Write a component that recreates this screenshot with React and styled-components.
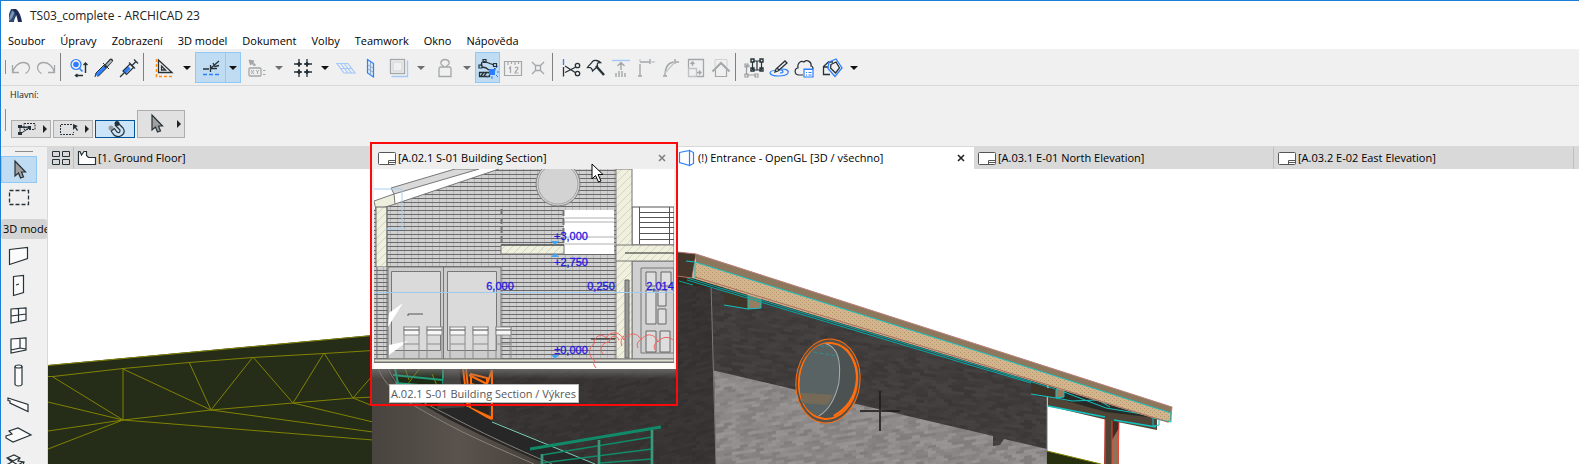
import React, { useState } from "react";
import styled, { createGlobalStyle } from "styled-components";

const GlobalStyle = createGlobalStyle`
  * {
    box-sizing: border-box;
  }
  body {
    margin: 0;
    font-family: "Open Sans", "Noto Sans", sans-serif;
    font-size: 12px;
    color: #000000;
    background: #ffffff;
  }
  button {
    margin: 0;
    padding: 0;
    border: none;
    background: none;
    font: inherit;
    color: inherit;
  }
`;

const Window = styled.div`
  display: flex;
  flex-direction: column;
  height: 100vh;
  overflow: hidden;
  border-top: 1px solid #1a7fd4;
  border-left: 1px solid #1a7fd4;
`;

const TitleBar = styled.header`
  display: flex;
  align-items: center;
  gap: 7px;
  height: 30px;
  padding-left: 7px;
  flex-shrink: 0;
`;

const Title = styled.h1`
  margin: 0;
  font-size: 12px;
  font-weight: normal;
  line-height: 16px;
  color: #222222;
`;

const MenuBar = styled.nav`
  display: flex;
  gap: 15px;
  height: 18px;
  padding-left: 7px;
  flex-shrink: 0;
`;

const MenuItem = styled.button`
  font-size: 11px;
  line-height: 20px;
  white-space: nowrap;
`;

const ToolBar = styled.div`
  display: flex;
  align-items: center;
  height: 37px;
  flex-shrink: 0;
  background: #f0f0f0;
  border-bottom: 1px solid #d9d9d9;
`;

const Grip = styled.span`
  width: 1px;
  height: ${(props) => props.$height}px;
  margin-left: 4px;
  margin-right: ${(props) => props.$after}px;
  background: #8c8c8c;
`;

const Separator = styled.span`
  width: 8px;
  height: 28px;
  padding-left: 2px;
  &::before {
    content: "";
    display: block;
    width: 1px;
    height: 28px;
    background: #808080;
  }
`;

const ToolButton = styled.button`
  display: flex;
  align-items: center;
  justify-content: center;
  width: ${(props) => (props.$wide ? 31 : 25)}px;
  height: 31px;
  padding-top: 1px;
  background: ${(props) => (props.$active ? "#bfdcf3" : "none")};
  border: 1px solid ${(props) => (props.$active ? "#90c8f6" : "transparent")};
`;

const ArrowButton = styled(ToolButton)`
  width: 16px;
  margin-left: -1px;
  &::before {
    content: "";
    border: 4px solid transparent;
    border-top-color: ${(props) => (props.$muted ? "#6e6e6e" : "#111111")};
    border-bottom: none;
  }
`;

const Options = styled.section`
  height: 61px;
  padding-top: 3px;
  flex-shrink: 0;
  background: #f0f0f0;
  border-bottom: 1px solid #d9d9d9;
`;

const OptionsLabel = styled.div`
  padding-left: 9px;
  font-size: 9px;
  line-height: 12px;
  color: #222222;
`;

const OptionsRow = styled.div`
  display: flex;
  align-items: flex-end;
  gap: 2px;
  height: 37px;
`;

const OptionsGrip = styled(Grip)`
  align-self: center;
`;

const OptionButton = styled.button`
  display: flex;
  align-items: center;
  justify-content: ${(props) => (props.$active ? "center" : "space-between")};
  width: ${(props) => (props.$big ? 48 : 40)}px;
  height: ${(props) => (props.$big ? 28 : 18)}px;
  padding: 0 3px 0 6px;
  background: ${(props) => (props.$active ? "#cce4f7" : "#e1e1e1")};
  border: 1px solid ${(props) => (props.$active ? "#005499" : "#adadad")};
`;

const Flyout = styled.i`
  border: 4px solid transparent;
  border-left-color: #222222;
  border-right: none;
`;

const Workspace = styled.div`
  display: flex;
  flex: 1;
  min-height: 0;
`;

const SideBar = styled.aside`
  width: 47px;
  padding-top: 4px;
  flex-shrink: 0;
  overflow: hidden;
  background: #f0f0f0;
  border-right: 1px solid #d9d9d9;
`;

const SideGrip = styled.div`
  width: 18px;
  height: 1px;
  margin: 0 0 4px 14px;
  background: #8c8c8c;
`;

const SideButton = styled.button`
  display: flex;
  align-items: center;
  justify-content: center;
  width: 36px;
  height: ${(props) => (props.$active ? 27 : 30)}px;
  background: ${(props) => (props.$active ? "#bfdcf3" : "none")};
  border: 1px solid ${(props) => (props.$active ? "#90c8f6" : "transparent")};
`;

const SideHeading = styled.h2`
  margin: 6px 0 1px;
  padding: 0 2px;
  height: 20px;
  font-size: 11px;
  font-weight: normal;
  line-height: 20px;
  white-space: nowrap;
  overflow: hidden;
  background: #d4d4d4;
  border-radius: 3px;
`;

const Main = styled.main`
  display: flex;
  flex-direction: column;
  flex: 1;
  min-width: 0;
`;

const TabBar = styled.div`
  display: flex;
  height: 22px;
  flex-shrink: 0;
  background: #d9d9d9;
`;

const Overview = styled.button`
  display: flex;
  align-items: center;
  justify-content: center;
  width: 26px;
  border-right: 1px solid #bfbfbf;
`;

const Tab = styled.div`
  position: relative;
  display: flex;
  align-items: center;
  flex: 0 1 300px;
  min-width: 0;
  padding: 0 8px 0 3px;
  background: ${(props) => (props.$active ? "#ffffff" : "#d9d9d9")};
  border-right: 1px solid ${(props) => (props.$active ? "#ffffff" : "#bfbfbf")};
`;

const TabLabel = styled.button`
  display: flex;
  align-items: center;
  gap: 1px;
  flex: 1;
  min-width: 0;
  font-size: 11px;
  line-height: 20px;
  white-space: nowrap;
`;

const Close = styled.button`
  display: flex;
  color: ${(props) => (props.$muted ? "#808080" : "#222222")};
`;

const Preview = styled.div`
  position: absolute;
  z-index: 2;
  top: -5px;
  left: -4px;
  width: 308px;
  height: 264px;
  border: 2px solid #fa0a0a;
`;

const PreviewHead = styled.div`
  display: flex;
  align-items: center;
  height: 25px;
  padding: 3px 10px 0 5px;
  background: #eeeeee;
`;

const PreviewBody = styled.div`
  padding: 0 2px;
  background: #f0f0f0;
`;

const PreviewFoot = styled.div`
  display: flex;
  align-items: flex-start;
  height: 35px;
  padding: 15px 0 0 17px;
  background: linear-gradient(rgba(120, 120, 120, 0.7), rgba(60, 60, 60, 0) 10px);
`;

const Tooltip = styled.div`
  padding: 0 2px 0 1px;
  font-size: 11px;
  line-height: 17px;
  white-space: nowrap;
  color: #575757;
  background: #ffffff;
  border: 1px solid #bbbbbb;
`;

const Pointer = styled.svg`
  position: absolute;
  left: 219px;
  top: 19px;
`;

const Viewport = styled.div`
  flex: 1;
  min-height: 0;
  overflow: hidden;
  background: #ffffff;
`;

const Drawing = styled.svg`
  display: block;
  width: 100%;
`;

const ink = "#263238";
const grey = "#a3a7a9";
const blue = "#2b7fff";
const pale = "#a3c8fa";

const icons = {
  undo: (
    <g stroke={grey} strokeWidth="1.3">
      <path d="M3.500 9v7.500H10M3.500 16.500C5 11 9 6.500 14 6.500c7 0 9 7 2.500 11" />
    </g>
  ),
  redo: (
    <g stroke={grey} strokeWidth="1.3">
      <path d="M20.500 9v7.500H14M20.500 16.500C19 11 15 6.500 10 6.500c-7 0-9 7-2.500 11" />
    </g>
  ),
  find: (
    <g>
      <circle cx="9" cy="8.500" r="5" stroke={blue} strokeWidth="1.200" />
      <circle cx="9" cy="8.500" r="2.800" fill={blue} stroke="none" />
      <path d="M12.500 12.500l3 3" stroke={blue} strokeWidth="1.600" />
      <path d="M9 19.500h7M10.500 18l-2 1.500 2 1.500M18.500 17V7.500M16.500 9l2-2 2 2" strokeWidth="1.400" />
    </g>
  ),
  dropper: (
    <g>
      <path d="M4.500 19.500L13 11" stroke={blue} strokeWidth="3.500" />
      <path d="M3 21l1-4 8-8M6 20.500l8.500-8.500M11 7l6 6" />
      <path d="M14 10l5-5.500" strokeWidth="4" strokeLinecap="round" />
      <path d="M14.500 9.500l5-5" stroke="#b8bdbf" strokeWidth="1.800" />
    </g>
  ),
  syringe: (
    <g>
      <path d="M7.500 16.500l5-5" stroke={blue} strokeWidth="3.500" />
      <path d="M3 21l4-4M6 15l7-7 3.500 3.500-7 7zM12 6.500l6 6M15 9.500l4-4M17 3.500l4 4" strokeWidth="1.200" />
    </g>
  ),
  setsquare: (
    <g>
      <path d="M5.500 4v12.500H19zM8.500 10v4h4z" strokeWidth="1.300" />
      <path d="M3.500 3v17.500H21" stroke="#ff8c1a" strokeWidth="1.500" strokeDasharray="3 2" />
    </g>
  ),
  snap: (
    <g>
      <path d="M4 13h6M11.500 9v7M12 12.500h6M12 12l8-7M14 7l2 3.500 4-1" strokeWidth="1.300" />
      <path d="M4 18.500h17" stroke={blue} strokeWidth="1.500" strokeDasharray="4 2" />
    </g>
  ),
  coords: (
    <g stroke={grey}>
      <path d="M4 4l5 1-1 1.500 2.500 2.500-1 1L7 7.500 5.500 9z" fill={grey} />
      <rect x="4" y="12" width="12" height="8" rx="1" strokeWidth="1.300" />
      <path d="M6 14l3 4m0-4l-3 4m5-4l1.500 2 1.500-2m-1.500 2v2M18 14.500h2.500M18 18.500h2.500" />
    </g>
  ),
  grid: (
    <g strokeWidth="1.300">
      <path d="M8 3v18M16 3v18M3 8h18M3 16h18" strokeDasharray="3 2" />
      <path d="M8 6v4M6 8h4M16 6v4M14 8h4M8 14v4M6 16h4M16 14v4M14 16h4" strokeWidth="2" />
    </g>
  ),
  plane: (
    <g stroke={pale} strokeWidth="1.200">
      <path d="M3 7.500h11l7 9.500H10zM6.500 12.500h11M7 8l7 9M10.500 8l7 9" />
    </g>
  ),
  plane3d: (
    <g>
      <path d="M8.500 3.500l6 4v13.500l-6-4z" stroke={blue} fill="#dce9fb" strokeWidth="1.200" />
      <path d="M11.500 6v13M8.500 8.500l6 4M8.500 12.500l6 4" stroke="#7d99bb" strokeWidth="0.800" />
    </g>
  ),
  frame: (
    <g>
      <rect x="3.500" y="3.500" width="14" height="14" stroke={grey} strokeWidth="1.300" />
      <path d="M4.500 20.500h16v-16" stroke={pale} strokeWidth="1.300" />
      <rect x="6" y="6" width="9" height="9" stroke="#cdd0d2" />
    </g>
  ),
  weight: (
    <g stroke={grey} strokeWidth="1.300">
      <path d="M10 11V9.500C6 8 8 3.500 12 3.500s6 4.500 2 6V11M7.500 11h9c1 0 1.500 1 1.500 2v7.500H6V13c0-1 .5-2 1.500-2z" />
    </g>
  ),
  trace: (
    <g strokeWidth="1.300">
      <path d="M7 5l11 4M6 6l-1 4M19 12l-1 5M6 11c3 0 5 1 7 3" />
      <path d="M3 9h3v3H3zM7 3.500h3v3H7zM17.500 7.500h3v3h-3z" strokeWidth="1.200" />
      <path d="M3.500 16.500h10v4h-10zM5 20l3-4m0 4l3-4" />
      <path d="M13 13h6v6h-6z" fill={blue} stroke="none" />
      <path d="M20 12l2-2M21 16h2M20 19l2 2M16 20v3M12 20l-1 2" stroke={blue} strokeWidth="1" />
    </g>
  ),
  ruler: (
    <g stroke={grey}>
      <path d="M3.500 19.500v-14h17v14zM7 5v4M10.500 5v3M14 5v4M17.500 5v3" strokeWidth="1.200" />
      <path d="M8 12.500l1.500-1.500v6M14 12q2-2 3 0c0 2-3 3-3 5h3.500" strokeWidth="1.200" />
    </g>
  ),
  nodeX: (
    <g stroke={grey} strokeWidth="1.300">
      <path d="M9.500 9.500h5v5h-5zM6 6l3.500 3.500M18 6l-3.500 3.500M6 18l3.500-3.500M18 18l-3.500-3.500" />
    </g>
  ),
  scissors: (
    <g strokeWidth="1.300">
      <path d="M4.500 3v6" stroke={blue} />
      <path d="M4.500 11v9.500M6 10l11 7M6 16.500L17 11" />
      <circle cx="18.500" cy="9.500" r="2.200" />
      <circle cx="18.500" cy="17.500" r="2.200" />
    </g>
  ),
  axe: (
    <g strokeWidth="1.300">
      <path d="M3.500 11.500C7 11 8 12 8.500 15l5-4.500c-1-4 1-4 3-4-2-2-6-3-8-1-1 2-3 3-5 6z" />
      <path d="M12 10l8 9" strokeWidth="2.400" />
    </g>
  ),
  raise: (
    <g stroke={grey} strokeWidth="1.400">
      <path d="M3 4.500h18" stroke={pale} />
      <path d="M12 14V7M8.500 10L12 6.500l3.500 3.500M7 21v-4M10 21v-6M13 21v-6M16 21v-4" />
    </g>
  ),
  corner: (
    <g stroke={grey} strokeWidth="1.400">
      <path d="M6 8v12M6 6h10M16 3v5M4 20h4" />
      <path d="M16 6h5M6 3v3" stroke="#c7c9ca" />
    </g>
  ),
  fillet: (
    <g stroke={grey} strokeWidth="1.400">
      <path d="M6 20C6 12 9 6 16 6M16 3v5M4 20h4M16 6h4" />
      <path d="M6 17L16 6" stroke="#c7c9ca" />
    </g>
  ),
  resize: (
    <g stroke={grey} strokeWidth="1.300">
      <path d="M4.500 12V3.500h15v17H13M8.500 10V6M6.500 8l2-2 2 2M13 16.500h4M15 14.500l2 2-2 2" />
      <path d="M4.500 12.500h8v8h-8z" stroke="#c0c3c4" />
    </g>
  ),
  roof: (
    <g stroke={grey} strokeWidth="2">
      <path d="M6 11V3.500h12V11" stroke="#cfd1d2" strokeWidth="1" />
      <path d="M6.500 14v6.500h11V14" strokeWidth="1.200" />
      <path d="M3.500 15.500L12 7l8.500 8.500" />
    </g>
  ),
  group: (
    <g strokeWidth="1.200">
      <path d="M4.500 9v10M5 19h9M4 10h4" stroke="#9a9ea0" />
      <path d="M3 8h3v3H3zM3 18h3v3H3zM13 18h3v3h-3z" stroke="#9a9ea0" />
      <path d="M10.500 6v8M19.500 6v8M11 5h8M11 14h8M15 5v9" />
      <path d="M9 3h3v3H9zM18 3h3v3h-3zM9 12h3v3H9zM18 12h3v3h-3z" strokeWidth="1.400" />
    </g>
  ),
  edit: (
    <g>
      <path d="M14 13c5 0 8 1 7 4-2 4-17 4-18 0 0-3 6-3 10-3s4 3 0 3" stroke={blue} strokeWidth="1.200" />
      <path d="M8 16l1-3 9-8 2 2-9 8zM10 12l2 2" strokeWidth="1.300" fill="#eee" />
    </g>
  ),
  cloud: (
    <g>
      <path d="M11 19H7c-5 0-5-7-1-7-1-5 3-8 6-6 3-3 8 0 7 4 1 0 2 1 2 3" strokeWidth="1.200" />
      <path d="M12 13h9v8h-9z" stroke={blue} fill="#fff" strokeWidth="1.200" />
      <path d="M12 13.500h9M14 16.500h1M16.500 16.500h3M14 19h1M16.500 19h3" stroke={blue} strokeWidth="1.200" />
    </g>
  ),
  rotate: (
    <g strokeWidth="1.300">
      <path d="M10 18.500H3.500v-8l5-4.500H13M4 11h4" />
      <path d="M9 6l7-3 6 9-7 8.500-7-8z" stroke={blue} />
      <path d="M11 8.500l5-2.500 3.500 6-4 5-5-5z" />
    </g>
  ),
  arrow: <path d="M8 3v15l3.500-3 2 5 3-1-2-5h4z" fill="#a0a0a0" strokeWidth="1.200" />,
  marquee: (
    <path d="M2.500 4.500h19v14h-19z" strokeWidth="1.300" strokeDasharray="4 2" />
  ),
  wall: <path d="M2.500 6.500l18-2v11l-18 6z" fill="#fbfbfb" strokeWidth="1.200" />,
  door: (
    <path d="M6.500 3.500l10-1v17l-10 3zM9 12l3-1" fill="#fbfbfb" strokeWidth="1.200" />
  ),
  window: (
    <path d="M4 6l15-1v12L4 20zM11.500 5.500v13M4 13l15-2" fill="#fbfbfb" strokeWidth="1.200" />
  ),
  cornerWindow: (
    <path d="M4 6l15-1v12L4 20zM13 5.500v9.500L4 17M13 15l6 1" fill="#fbfbfb" strokeWidth="1.200" />
  ),
  column: (
    <g fill="#fbfbfb" strokeWidth="1.200">
      <path d="M8 3.500v18c1 2 6 2 7 0v-18" />
      <ellipse cx="11.500" cy="3.500" rx="3.500" ry="1.500" />
    </g>
  ),
  beam: (
    <path d="M1 5l20 6.500v7L3 10v-2L1 7.500z" fill="#fbfbfb" strokeWidth="1.200" />
  ),
  slab: (
    <path d="M-1 13l6-2-3-3 9-3 13 7-18 7-7-4z" fill="#fbfbfb" strokeWidth="1.200" />
  ),
  stair: (
    <path d="M0 5l7-3 6 3-2 3 6 1-1 3 6 1-9 5L1 11l4-2zM1 5l5 3 6-3M6 9l5 3 5-3" fill="#fbfbfb" strokeWidth="1.200" />
  ),
};

const Icon = ({ name }) => (
  <svg
    width="24"
    height="24"
    viewBox="0 0 24 24"
    fill="none"
    stroke={ink}
    overflow="visible"
    aria-hidden="true"
  >
    {icons[name]}
  </svg>
);

const tools = [
  ["undo"],
  ["redo"],
  null,
  ["find"],
  ["dropper"],
  ["syringe"],
  null,
  ["setsquare", "split"],
  ["snap", "split", "active"],
  ["coords", "split", "muted"],
  ["grid", "split"],
  ["plane"],
  ["plane3d"],
  ["frame", "split", "muted"],
  ["weight", "split", "muted"],
  ["trace", "", "active"],
  ["ruler"],
  ["nodeX"],
  null,
  ["scissors"],
  ["axe"],
  ["raise"],
  ["corner"],
  ["fillet"],
  ["resize"],
  ["roof"],
  null,
  ["group"],
  ["edit"],
  ["cloud"],
  ["rotate", "split"],
];

const menu = [
  "Soubor",
  "Úpravy",
  "Zobrazení",
  "3D model",
  "Dokument",
  "Volby",
  "Teamwork",
  "Okno",
  "Nápověda",
];

const sideTools = [
  "wall",
  "door",
  "window",
  "cornerWindow",
  "column",
  "beam",
  "slab",
  "stair",
];

const Logo = () => (
  <svg width="15" height="16" viewBox="0 0 15 16" aria-hidden="true">
    <path d="M3 1h5v13H1V6z" fill="#2b4a70" />
    <path d="M6 1c-3 3-5 8-5 12 3-2 5-6 6-11z" fill="#7c95b8" />
    <path d="M5 1h3c3 2 5 7 6 13h-4C9 9 8 5 5 3z" fill="#1d2a55" />
    <path d="M8 8c1 2 1 4 1 6H6c0-2 1-4 2-6z" fill="#ffffff" />
  </svg>
);

const LayoutIcon = () => (
  <svg width="20" height="16" viewBox="0 0 20 16" fill="#fff" stroke="#555" aria-hidden="true">
    <rect x="1.500" y="2.500" width="17" height="12" rx="1" />
    <path d="M11.500 14.500v-4h7M12 12.500h6" fill="none" />
  </svg>
);

const PlanIcon = () => (
  <svg width="20" height="16" viewBox="0 0 20 16" fill="#fff" stroke={ink} aria-hidden="true">
    <path d="M1.500 1.500v13h17V7.500h-7l-2-2v-4H7L4.500 5 3 1.500z" strokeWidth="1.200" />
  </svg>
);

const ViewIcon = () => (
  <svg width="20" height="18" viewBox="0 0 20 18" fill="none" stroke={blue} aria-hidden="true">
    <path d="M2.500 3.500l10-2v15l-10-3zM12.500 1.500l4 2v11l-4 2z" strokeWidth="1.200" />
  </svg>
);

const CloseIcon = () => (
  <svg width="8" height="8" viewBox="0 0 8 8" stroke="currentColor" strokeWidth="1.600" aria-hidden="true">
    <path d="M1 1l6 6M7 1L1 7" />
  </svg>
);

// repeatable random so that the bricks stay the same on each render
const bricks = (base, spread) => {
  let seed = 12345;
  const cells = [];
  for (let r = 0; r < 48; r++) {
    for (let c = 0; c < 30; c++) {
      seed = (seed * 16807) % 2147483647;
      const v = base + Math.floor((seed / 2147483647) * spread);
      cells.push(
        <rect
          key={`${r}-${c}`}
          x={c * 8 - (r % 2) * 4}
          y={r * 3}
          width="8"
          height="3"
          fill={`rgb(${v + 4},${v},${v})`}
        />
      );
    }
  }
  return cells;
};

const Scene = () => (
  <Drawing viewBox="48 169 1531 295" fill="none" role="img" aria-label="3D model">
    <defs>
      <pattern id="dark" width="232" height="144" patternUnits="userSpaceOnUse" patternTransform="skewY(6)">
        <rect width="232" height="144" fill="#3f3d3d" />
        {bricks(55, 12)}
      </pattern>
      <pattern id="side" width="232" height="144" patternUnits="userSpaceOnUse" patternTransform="skewY(-14)">
        <rect width="232" height="144" fill="#343333" />
        {bricks(48, 8)}
      </pattern>
      <pattern id="light" width="232" height="144" patternUnits="userSpaceOnUse" patternTransform="skewY(-8)">
        <rect width="232" height="144" fill="#8b8585" />
        {bricks(124, 26)}
      </pattern>
      <pattern id="wood" width="4" height="4" patternUnits="userSpaceOnUse">
        <rect width="4" height="4" fill="#d3b48c" />
        <rect width="1" height="1" fill="#b29469" />
        <rect x="2" y="2" width="1" height="1" fill="#b79a72" />
      </pattern>
      <linearGradient id="brown" x1="0" x2="1" y1="0" y2="0">
        <stop offset="0" stopColor="#49443f" />
        <stop offset="0.500" stopColor="#5a534d" />
        <stop offset="1" stopColor="#453f3a" />
      </linearGradient>
    </defs>

    <path d="M48 365L373 335V464H48z" fill="#252d19" />
    <path
      d="M48 365.500L373 335.500M48 376.500h5l70-8 66-6 64-5 71-4 49-3M53 377l70 43M48 402l75 18-75 11M48 449l75-29V369l88 41-22-48M211 410l42-53 40 46 31-50 29 45 20-23M123 420l88-10 82-7 60-5 20-1M123 420l250 20M211 410l162 22M293 403l80 19M353 398l20 8"
      stroke="#828203"
    />

    <path d="M372 368h339l5 96H372z" fill="url(#side)" />
    <path d="M677 276l36 4 3 184H677z" fill="url(#side)" />
    <path d="M390 368h54v40l-14 1-22-15z" fill="#1f2a15" />
    <path d="M405 368l4 12M420 368l-13 17M432 374l12 28" stroke="#828203" />
    <path d="M395 368l3 16M443 368v38M393 375l50 5M395 383l48 4" stroke="#1f9c79" strokeWidth="2" />
    <path d="M446 368h20l1 40-30 1z" fill="#454341" />
    <path d="M459 368h30v53l-24-11z" fill="#2c2622" />
    <path d="M466 368l4 40 22 10V370l-5 14-18-9M463 368l5 42 24 9M471 374l16 4v10l-16-4zM472 387l15 4v11l-15-4z" stroke="#ff6d0d" strokeWidth="2" />
    <path d="M436 409l32-2 24 14 103 43h-50c-40-16-80-32-115-55z" fill="#272727" />
    <path d="M372 368h14c8 22 32 34 62 51 30 15 58 28 98 45H372z" fill="url(#brown)" />
    <path d="M388 368c7 20 28 31 60 47 32 17 64 32 104 49M378 368c9 23 32 36 60 51 30 17 64 31 96 45" stroke="#858078" />
    <path d="M492 422l103 42" stroke="#7fd0bb" />
    <path d="M530 449l131-22M542 454v10M599 440v24M652 430v34" stroke="#118a68" strokeWidth="3" />
    <path d="M542 455l110-18M542 463l110-14M600 463l52-4" stroke="#118a68" strokeWidth="1.500" />
    <path d="M542 454v10M599 440v24M652 430v34" stroke="#7c9a8d" />

    <path d="M711 278l23 2 236 76 77 27v81H716z" fill="url(#dark)" />
    <path d="M714 370.500l279 65.500v10l7-1 4-6 43 10v15H716z" fill="url(#light)" />
    <path d="M711 284l5 180M1047 396v68" stroke="#7b7977" />

    <path d="M1047 451l54 13h-54z" fill="#26300f" />
    <path d="M1047 451l54 13" stroke="#828203" />
    <path d="M1105 418h14v46h-15z" fill="#514334" />
    <path d="M1112 420h7v44h-7z" fill="#8b745a" />
    <path d="M1112 420h7v8l-7 12z" fill="#3b3027" />
    <path d="M1105 418v46M1112 420v44M1119 420l-1 44" stroke="#ff3b30" />
    <path d="M1048 396l13-4 96 25v13l-54-11-55-13z" fill="#4f4436" />
    <path d="M1048 406l57 11M1114 420l42 7" stroke="#13c2c2" strokeWidth="1.500" />
    <path d="M1044 380l30 6 86 30-4 2-50-6-50-14z" fill="#272a26" />
    <path d="M1031 383l25 7v8l-25-4z" fill="#3e3428" />
    <path d="M1056 389h8v8l-8 1z" fill="#967d60" stroke="#13c2c2" />
    <path d="M1031 394l25 4 16 3 26-1 12 7M1064 392l42 16 48 8M1153 417v9l6-1v-7" stroke="#13c2c2" />

    <path d="M677 275l18 3 40 10-22 0-36-4z" fill="#33291f" />
    <path d="M677 252l19 2-4 24-15-2z" fill="#44362a" stroke="#b06e68" />
    <path d="M724 289l24 6v14l-24-4z" fill="#3f3529" />
    <path d="M748 295h13v13l-13 1z" fill="#967d60" />
    <path d="M724 305l24 4 13-1v-9M748 295v14" stroke="#13c2c2" />
    <path d="M696 254l476 153-1 14L696 276z" fill="#8d785e" />
    <path d="M695 262l276 87 200 64-2 10-199-61L692 278z" fill="url(#wood)" />
    <path d="M696 254l476 153-1 8" stroke="#b98079" />
    <path d="M686 261l9 1v17M695 262l276 87 200 64v9l-18-4" stroke="#13c2c2" />
    <path d="M695 277l276 84 197 61" stroke="#a86d62" />
    <path d="M687 278l283 85 85 26M687 280l283 85 61 18M679 281l14 4" stroke="#07a7a5" />

    <g transform="rotate(7 828 381)">
      <ellipse cx="828" cy="381" rx="32" ry="42" fill="#55504a" stroke="#ff6d0d" />
      <ellipse cx="828" cy="381" rx="29" ry="38" fill="#4c5252" stroke="#ff6d0d" strokeWidth="2" />
      <path d="M821 344c14 2 18 20 18 38-2 18-8 29-16 35-14-2-23-16-23-36 0-18 8-34 21-37z" fill="#5a6363" />
      <path d="M802 396l33-2c-1 4-3 8-5 11l-25 1z" fill="#756a57" />
      <path d="M821 344c14 2 18 20 18 38-2 18-8 29-16 35" stroke="#a8adad" />
      <path d="M842 347c20 18 20 50-4 68" stroke="#ff6d0d" strokeWidth="2" />
      <path d="M810 354l24 1M816 347h8" stroke="#318c8e" strokeDasharray="4 2" />
    </g>
    <path d="M860 411h40M880 391v40" stroke="#1c1c1c" strokeWidth="2" opacity="0.800" />
  </Drawing>
);

const SectionDrawing = () => (
  <Drawing
    viewBox="0 0 300 200"
    fill="none"
    fontFamily='"Liberation Sans", Arial, sans-serif'
    fontSize="11"
    role="img"
    aria-label="Building section"
  >
    <defs>
      <pattern id="siding" width="7" height="4" patternUnits="userSpaceOnUse">
        <rect width="7" height="4" fill="#d0d0d0" />
        <path d="M2.500 0v4" stroke="#b4b4b4" />
        <path d="M0 1.500h7" stroke="#6a6a6a" />
      </pattern>
      <pattern id="hatch" width="8" height="8" patternUnits="userSpaceOnUse">
        <rect width="8" height="8" fill="#f0f0df" />
        <path d="M0 8l8-8" stroke="#d4d4c0" />
      </pattern>
    </defs>
    <rect width="300" height="200" fill="url(#siding)" />
    <path d="M0 0h125L21 35 0 40z" fill="#ffffff" />
    <path d="M17 19L81 0h24L20 25z" fill="#d9d9d9" stroke="#777777" />
    <path d="M21 35L125 0" stroke="#777777" />
    <path d="M0 32l20-7 1 10-19 6z" fill="#eeeedd" stroke="#777777" />
    <path d="M2 38h11v60H2z" fill="url(#hatch)" stroke="#666666" />
    <path d="M0 98h14v92H0z" fill="url(#siding)" />
    <path d="M3 98v92M13 38v152" stroke="#777777" />
    <path d="M0 20h28v40H12" stroke="#a5cff0" />
    <circle cx="184" cy="15" r="22" fill="#d3d3d3" stroke="#808080" />
    <circle cx="184" cy="15" r="20" stroke="#a5a5a5" />
    <path d="M190 41h50v44h-50z" fill="#ffffff" />
    <path d="M190 49h50M190 53h50M190 68h50M190 75h50" stroke="#b0b0b0" />
    <path d="M127.500 40v36M189.500 41v35" stroke="#777777" strokeDasharray="6 3" strokeWidth="2" />
    <path d="M127 76h63v9h-63z" fill="url(#hatch)" stroke="#777777" />
    <path d="M127 76h63" stroke="#333333" />

    <path d="M258 0h42v38h-42z" fill="#ffffff" />
    <path d="M258 38h42v38h-42z" fill="#ffffff" stroke="#555555" />
    <path d="M265 43.500h35M265 48.500h35M265 53.500h35M265 58.500h35M265 64.500h35M265 70.500h35M265.500 38v37M295.500 38v37" stroke="#555555" />
    <path d="M258 92h42v98h-42z" fill="#d0d0d0" stroke="#777777" />
    <path d="M267 99h33v85h-33z" stroke="#777777" />
    <path d="M272 103h10v14h-10zM287 103h10v14h-10zM272 121h10v34h-10zM284 121h8v16h-8zM284 140h8v15h-8zM272 162h10v21h-10zM286 162h10v21h-10z" fill="#dedede" stroke="#666666" />
    <path d="M242 0h16v190h-16z" fill="url(#hatch)" stroke="#777777" />
    <path d="M242 76h58v16h-58z" fill="url(#hatch)" stroke="#777777" />
    <path d="M251 84h49" stroke="#222222" />
    <path d="M251 111h4v78h-4z" fill="#999999" stroke="#666666" />

    <path d="M14 98h113v92H14z" fill="#cccccc" stroke="#777777" />
    <path d="M17.500 102.500h49v79h-49zM73.500 102.500h49v79h-49zM69.500 98v92" fill="#dadada" stroke="#777777" />
    <path d="M15 144l14-10-15 24zM15 186l19-14-19 4z" fill="#ffffff" />
    <path d="M34 147v-2h15" stroke="#555555" />
    {[30, 53, 76, 99, 122].map((x) => (
      <g key={x} stroke="#8c8c8c">
        <path d={`M${x} 157v32M${x + 15} 157v32M${x} 175h15`} />
        <path d={`M${x} 158h15v8H${x}z`} fill="#f7f7f7" />
        <path d={`M${x} 161h15`} stroke="#444444" />
      </g>
    ))}
    <path d="M0 190h300v3H0z" fill="#ddddcd" stroke="#777777" />
    <path d="M0 194h300v6H0z" fill="#fcfcf8" />
    <path d="M0 123.500h300" stroke="#9fcaef" />
    <path d="M217 170h24" stroke="#222222" />
    <path
      d="M222 199c-5-6 0-6-2-8-6-4-6-12 0-16 0-10 10-10 12-6 4-7 14-7 18 2 4-8 14-8 17 0 6-8 14-6 17 2 4-6 12-6 16-1M229 185c-5-5 0-12 6-12 2-8 8-7 10-2M250 167c-4 4-3 8-2 10M267 170c-3 3-5 5-3 9M284 172c-3 2-5 5-3 9"
      stroke="#f0605c"
    />
    <path d="M177 72h8l-4 4zM177 88h8l-4-4zM177 186h8l-4 4z" fill="#43a4f5" />
    <g fill="#2418e0" stroke="#2418e0" strokeWidth="0.300" textAnchor="middle">
      <text x="197" y="71">+3,000</text>
      <text x="197" y="97">+2,750</text>
      <text x="126" y="121">6,000</text>
      <text x="227" y="121">0,250</text>
      <text x="286" y="121">2,014</text>
      <text x="197" y="185">±0,000</text>
    </g>
  </Drawing>
);

const TabItem = ({ icon, children, active, onSelect, closable }) => (
  <Tab $active={active}>
    <TabLabel onClick={onSelect}>
      {icon}
      {children}
    </TabLabel>
    {closable && (
      <Close aria-label="Zavřít">
        <CloseIcon />
      </Close>
    )}
  </Tab>
);

const TabPreview = () => (
  <Preview>
    <PreviewHead>
      <TabLabel>
        <LayoutIcon />
        [A.02.1 S-01 Building Section]
      </TabLabel>
      <Close $muted aria-label="Zavřít">
        <CloseIcon />
      </Close>
    </PreviewHead>
    <PreviewBody>
      <SectionDrawing />
    </PreviewBody>
    <PreviewFoot>
      <Tooltip role="tooltip">A.02.1 S-01 Building Section / Výkres</Tooltip>
    </PreviewFoot>
    <Pointer width="13" height="20" viewBox="0 0 13 20" fill="#fff" stroke="#000" aria-hidden="true">
      <path d="M1 1v15l3.500-3.500 3 6.500 2.500-1-3-6.500H12z" />
    </Pointer>
  </Preview>
);

const App = () => {
  const [tab, setTab] = useState("3d");

  return (
    <Window>
      <GlobalStyle />
      <TitleBar>
        <Logo />
        <Title>TS03_complete - ARCHICAD 23</Title>
      </TitleBar>

      <MenuBar>
        {menu.map((item) => (
          <MenuItem key={item}>{item}</MenuItem>
        ))}
      </MenuBar>

      <ToolBar>
        <Grip $height={14} $after={2} />
        {tools.map((tool, i) => {
          if (!tool) return <Separator key={i} />;
          const [name, split, state] = tool;
          const active = state === "active";
          return (
            <React.Fragment key={name}>
              <ToolButton $wide={split} $active={active} aria-label={name}>
                <Icon name={name} />
              </ToolButton>
              {split && (
                <ArrowButton
                  $active={active}
                  $muted={state === "muted"}
                  aria-label={`${name} options`}
                />
              )}
            </React.Fragment>
          );
        })}
      </ToolBar>

      <Options>
        <OptionsLabel>Hlavní:</OptionsLabel>
        <OptionsRow>
          <OptionsGrip $height={22} $after={3} />
          <OptionButton aria-label="Geometry">
            <svg width="18" height="14" viewBox="0 0 18 14" fill="none" stroke={ink} aria-hidden="true">
              <path d="M6 1.500h11v6H6z" strokeDasharray="2 1" />
              <path d="M2 5v7l9-6zM2 5h9" />
              <path d="M0 3h4v3H0zM0 10h4v3H0zM10 4h3v3h-3z" fill={ink} stroke="none" />
            </svg>
            <Flyout />
          </OptionButton>
          <OptionButton aria-label="Selection">
            <svg width="19" height="13" viewBox="0 0 19 13" fill="none" stroke={ink} aria-hidden="true">
              <path d="M12 1.500H.5v10h13V9" strokeDasharray="2 1" />
              <path d="M13 1l5 2-2 1 2 3-1 1-2-3-2 2z" fill={ink} stroke="none" />
            </svg>
            <Flyout />
          </OptionButton>
          <OptionButton $active aria-label="Magnet">
            <svg width="18" height="16" viewBox="0 0 18 16" fill="none" stroke={ink} aria-hidden="true">
              <circle cx="3" cy="7" r="2.500" fill="#999" stroke="none" />
              <circle cx="9" cy="2.500" r="2.500" fill={ink} stroke="none" />
              <path d="M10 2l5 5c4 6-4 11-9 7L3 10M8 5l4 4c0 3-1 3-3 2L6 7M11 8l-4-4M3 10l3-2" strokeWidth="1.200" />
            </svg>
          </OptionButton>
          <OptionButton $big aria-label="Arrow">
            <Icon name="arrow" />
            <Flyout />
          </OptionButton>
        </OptionsRow>
      </Options>

      <Workspace>
        <SideBar>
          <SideGrip />
          <SideButton $active aria-label="arrow">
            <Icon name="arrow" />
          </SideButton>
          <SideButton aria-label="marquee">
            <Icon name="marquee" />
          </SideButton>
          <SideHeading>3D model</SideHeading>
          {sideTools.map((name) => (
            <SideButton key={name} aria-label={name}>
              <Icon name={name} />
            </SideButton>
          ))}
        </SideBar>

        <Main>
          <TabBar>
            <Overview aria-label="Overview">
              <svg width="18" height="14" viewBox="0 0 18 14" fill="none" stroke={ink} aria-hidden="true">
                <path d="M.5.500h7v5h-7zM10.500.500h7v5h-7zM.5 8.500h7v5h-7zM10.500 8.500h7v5h-7z" />
              </svg>
            </Overview>
            <TabItem icon={<PlanIcon />} active={tab === "plan"} onSelect={() => setTab("plan")}>
              [1. Ground Floor]
            </TabItem>
            <Tab>
              <TabPreview />
            </Tab>
            <TabItem icon={<ViewIcon />} active={tab === "3d"} onSelect={() => setTab("3d")} closable>
              (!) Entrance - OpenGL [3D / všechno]
            </TabItem>
            <TabItem icon={<LayoutIcon />} active={tab === "north"} onSelect={() => setTab("north")}>
              [A.03.1 E-01 North Elevation]
            </TabItem>
            <TabItem icon={<LayoutIcon />} active={tab === "east"} onSelect={() => setTab("east")}>
              [A.03.2 E-02 East Elevation]
            </TabItem>
          </TabBar>
          <Viewport>
            <Scene />
          </Viewport>
        </Main>
      </Workspace>
    </Window>
  );
};

export default App;
